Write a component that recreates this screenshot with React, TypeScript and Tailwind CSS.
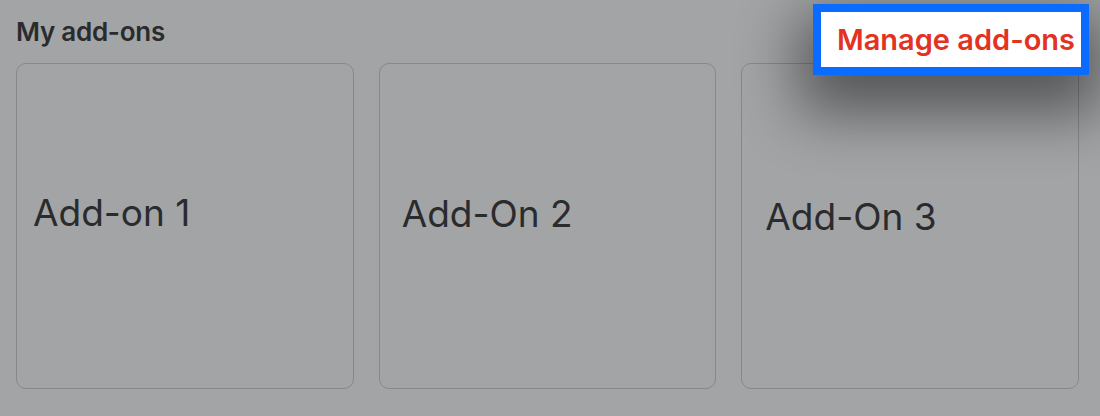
import React from 'react';

const addOns = [
  { name: 'Add-on 1', pad: 'pl-[16px] pb-[28px]' },
  { name: 'Add-On 2', pad: 'pl-[22px] pb-[26px]' },
  { name: 'Add-On 3', pad: 'pl-[23px] pb-[20px]' },
];

const App: React.FC = () => {
  return (
    <div
      className="relative h-[416px] w-[1100px] overflow-hidden bg-[#a3a4a6] px-4 pt-[17px]"
      style={{ fontFamily: 'Inter, "Noto Sans", sans-serif' }}
    >
      {/* Section header */}
      <h2 className="text-[26px] leading-[30px] font-semibold tracking-[-0.01em] text-[#2a2b2d]">
        My add-ons
      </h2>

      {/* Highlighted action */}
      <button className="absolute right-[11px] top-[4px] border-[8px] border-[#0a6cff] bg-white pl-[16px] pr-[6px] py-[8px] text-[29px] leading-[39px] font-semibold text-[#e3321f] shadow-[0_24px_60px_14px_rgba(0,0,0,0.48)]">
        Manage add-ons
      </button>

      {/* Cards */}
      <div className="mt-[16px] grid grid-cols-3 gap-[25px] pr-[5px]">
        {addOns.map((a) => (
          <div
            key={a.name}
            className={`flex h-[326px] items-center rounded-[10px] border border-[#87888a] ${a.pad}`}
          >
            <span className="text-[37px] leading-none text-[#2a2b2d]">{a.name}</span>
          </div>
        ))}
      </div>
    </div>
  );
};

export default App;
